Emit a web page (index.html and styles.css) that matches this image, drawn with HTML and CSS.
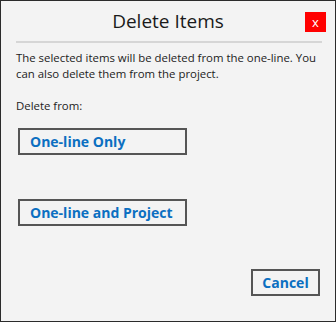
FILE: index.html
```html
<!DOCTYPE html>
<html>
<head>
<meta charset="utf-8">
<link rel="stylesheet" href="styles.css">
</head>
<body>
<div class="dialog">
  <div class="header">
    <span></span>
    <h1 class="title">Delete Items</h1>
    <button class="close">x</button>
  </div>
  <div class="sep"></div>
  <p class="msg">The selected items will be deleted from the one-line. You can also delete them from the project.</p>
  <p class="label">Delete from:</p>
  <button class="btn btn-wide">One-line Only</button>
  <button class="btn btn-wide btn-second">One-line and Project</button>
  <div class="footer">
    <button class="btn btn-cancel">Cancel</button>
  </div>
</div>
</body>
</html>
```
FILE: styles.css
```css
html, body {
  margin: 0;
  padding: 0;
  background: #f3f3f3;
}
.dialog {
  width: 336px;
  height: 322px;
  box-sizing: border-box;
  border: 1px solid #2b2b2b;
  background: #f3f3f3;
  font-family: "Open Sans", "Noto Sans", sans-serif;
  color: #222;
  display: flex;
  flex-direction: column;
}
.header {
  display: grid;
  grid-template-columns: 1fr auto 1fr;
  align-items: start;
  height: 40px;
}
.title {
  margin: 6px 0 0 0;
  font-size: 19px;
  font-weight: 400;
  line-height: 28px;
  color: #1a1a1a;
}
.close {
  justify-self: end;
  margin: 11px 9px 0 0;
  width: 21px;
  height: 20px;
  padding: 0;
  border: none;
  background: #ff0000;
  color: #fff;
  font-family: "Open Sans", sans-serif;
  font-size: 13px;
  line-height: 18px;
  cursor: pointer;
}
.sep {
  height: 2px;
  background: #d6d6d6;
  margin: 0 13px 0 15px;
}
.msg {
  margin: 7px 8px 0 15px;
  font-size: 11.4px;
  line-height: 16px;
}
.label {
  margin: 16px 0 0 15px;
  font-size: 11.4px;
  line-height: 16px;
}
.btn {
  box-sizing: border-box;
  height: 27px;
  border: 2px solid #555;
  background: #f3f3f3;
  color: #0b6fc1;
  font-family: "Open Sans", "Noto Sans", sans-serif;
  font-weight: 700;
  font-size: 14px;
  line-height: 20px;
  padding: 0 0 0 10px;
  text-align: left;
  cursor: pointer;
}
.btn-wide {
  width: 169px;
  margin: 14px 0 0 17px;
}
.btn-second {
  margin-top: 44px;
}
.footer {
  display: flex;
  justify-content: flex-end;
  margin: 43px 15px 0 0;
}
.btn-cancel {
  width: 69px;
  padding: 0;
  text-align: center;
}
```
